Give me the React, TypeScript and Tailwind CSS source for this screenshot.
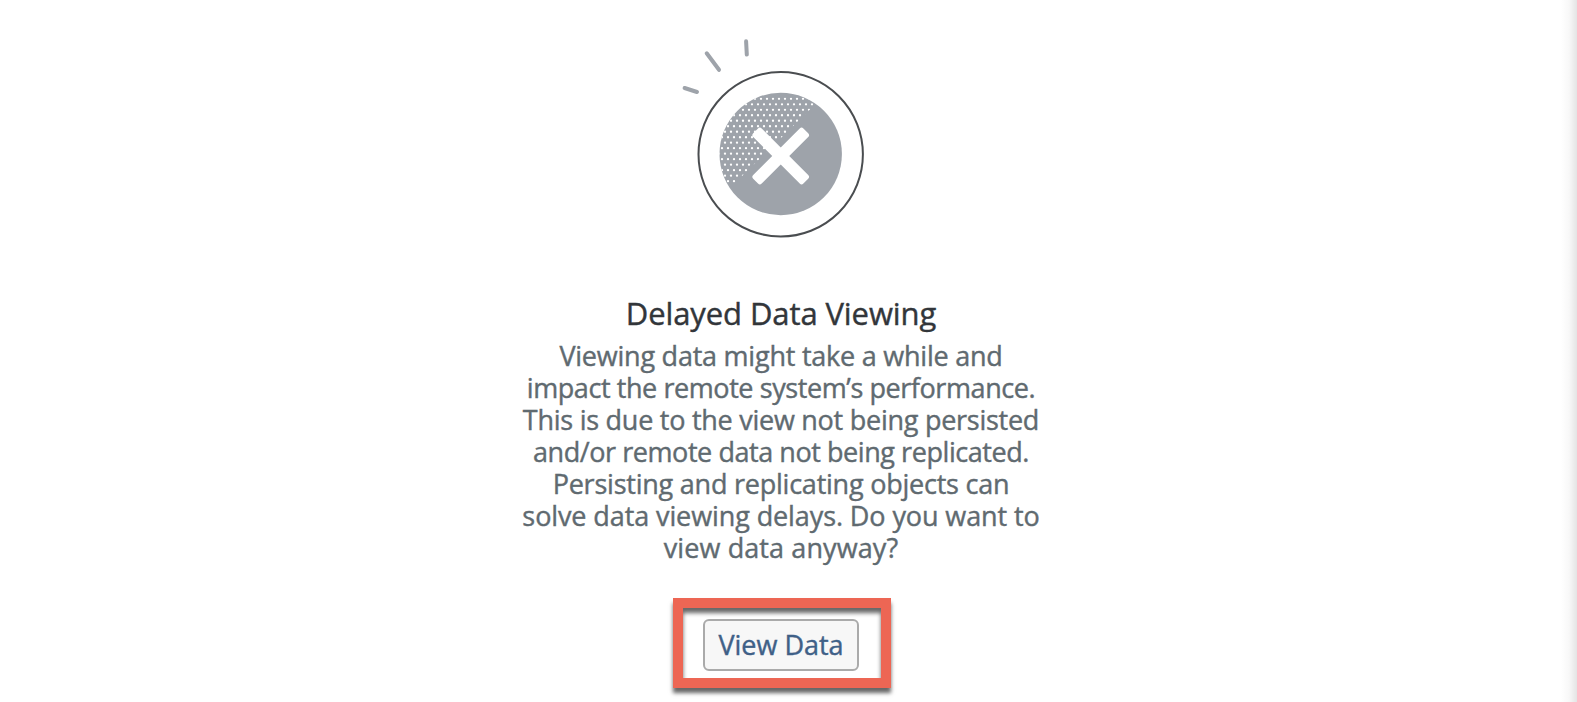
const lines = [
  { text: "Viewing data might take a while and", tracking: "tracking-[-0.23px]" },
  { text: "impact the remote system’s performance.", tracking: "tracking-[-0.42px]" },
  { text: "This is due to the view not being persisted", tracking: "tracking-[-0.26px]" },
  { text: "and/or remote data not being replicated.", tracking: "tracking-[-0.44px]" },
  { text: "Persisting and replicating objects can", tracking: "tracking-[-0.23px]" },
  { text: "solve data viewing delays. Do you want to", tracking: "tracking-[-0.1px]" },
  { text: "view data anyway?", tracking: "tracking-[0.1px]" },
];

const rows = Array.from({ length: 16 }, (_, i) => i);
const columns = Array.from({ length: 20 }, (_, i) => i);

function ErrorIllustration() {
  return (
    <svg className="block h-[210px] w-[200px]" viewBox="681 30 200 210" fill="none" overflow="visible">
      <defs>
        <clipPath id="disc">
          <circle cx="780.7" cy="154" r="61.2" />
        </clipPath>
        <clipPath id="shade">
          <path d="M700 80H840L734 184H700Z" />
        </clipPath>
      </defs>
      <circle cx="780.7" cy="154.3" r="82.2" stroke="#4a4d50" strokeWidth="2" />
      <circle cx="780.7" cy="154" r="61.2" fill="#9ea3aa" />
      <g clipPath="url(#disc)">
        <g clipPath="url(#shade)" fill="#fff">
          {rows.map((row) =>
            columns.map((column) => (
              <circle key={`${row}-${column}`} cx={716 + column * 6 + (row % 2 ? 0 : 3)} cy={98.8 + row * 5.49} r="1.15" />
            )),
          )}
        </g>
      </g>
      <g fill="#fff">
        <rect x="745.2" y="150" width="71" height="12" rx="2.6" transform="rotate(45 780.7 156)" />
        <rect x="745.2" y="150" width="71" height="12" rx="2.6" transform="rotate(-45 780.7 156)" />
      </g>
      <path d="M684.6 88L697 92M706.7 53.3L719 69.8M746.1 41.3L746.8 54.6" stroke="#9ea3aa" strokeWidth="4" strokeLinecap="round" />
    </svg>
  );
}

export default function App() {
  return (
    <main className="flex h-[702px] w-full overflow-hidden bg-white font-['Open_Sans',sans-serif] [-webkit-text-stroke:0.4px_currentColor]">
      <section className="flex flex-1 flex-col items-center pt-[30px] pl-px">
        <ErrorIllustration />
        <h1 className="mt-[52px] text-[31px] leading-[42px] tracking-[-0.1px] text-[#32363a]">Delayed Data Viewing</h1>
        <p className="mt-[6px] text-center text-[27px] leading-[32px] text-[#606a70]">
          {lines.map((line) => (
            <span key={line.text} className={`block whitespace-nowrap ${line.tracking}`}>{line.text}</span>
          ))}
        </p>
        <div className="mt-[34px] ml-[2px] flex h-[90px] w-[218px] justify-center border-[10px] border-[#ed6654] pt-[11px] pr-[2px] shadow-[0_5px_4px_rgba(0,0,0,0.6),inset_0_5px_4px_rgba(0,0,0,0.6)]">
          <button className="h-[52px] w-[156px] rounded-md border-2 border-[#aaa] bg-[#f7f7f7] text-[27px] leading-[46px] text-[#3f6087]">View Data</button>
        </div>
      </section>
      <div className="w-4 bg-linear-to-r from-white via-[#f8f8f8] to-[#e4e4e4]" />
    </main>
  );
}
